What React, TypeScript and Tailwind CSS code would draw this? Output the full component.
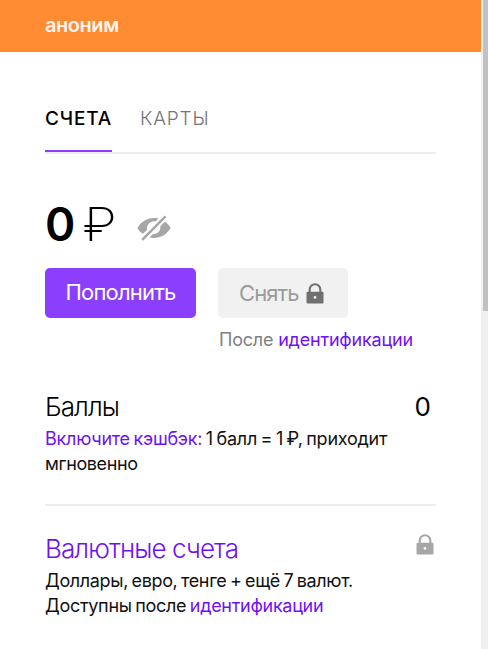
import React from "react"

interface LockProps {
  className?: string
}

function Lock({ className }: LockProps) {
  return (
    <svg viewBox="0 0 18 21" fill="none" className={className}>
      <path d="M3.7 9.500V6.400a5.300 5.200 0 0 1 10.600 0V9.500" stroke="currentColor" strokeWidth="2.1" />
      <path
        fillRule="evenodd"
        fill="currentColor"
        d="M1.700 8.800h14.600a1.200 1.200 0 0 1 1.200 1.200v9.200a1.200 1.200 0 0 1-1.200 1.200H1.700a1.200 1.200 0 0 1-1.200-1.200V10a1.200 1.200 0 0 1 1.200-1.200Zm7.300 4.200a1.400 1.400 0 1 0 0 2.800a1.400 1.400 0 0 0 0-2.800Z"
      />
    </svg>
  )
}

function HiddenEye() {
  return (
    <svg viewBox="0 0 34 26" fill="none" className="h-[26px] w-[34px] text-[#a6a6a6]">
      <path
        fill="currentColor"
        d="M21.500 3.400C13 1.800 5 5 .4 13c1.300 2.300 3 4.200 5.400 5.700L10.200 15C9.300 11 11.500 7.100 16.500 6.300L18.500 6.500Z"
      />
      <path
        fill="currentColor"
        d="M27.800 6.800C30.200 8.300 32.200 10.400 33.700 13C29 20.800 21.500 24.100 12.600 22.600L15.700 19.300C21 19.200 24 15.500 23.300 11.300Z"
      />
      <path d="M5.200 24.800L28.500 1.300" stroke="currentColor" strokeWidth="2.500" />
    </svg>
  )
}

export default function App() {
  return (
    <div className="flex h-[649px] w-[488px] overflow-hidden bg-white font-['Inter','Liberation_Sans',sans-serif] text-black">
      <div className="w-[481px] shrink-0">
        <header className="flex h-[52px] items-center bg-[#ff8b33] pb-[3px] pl-[45px]">
          <span className="text-[20px] leading-6 font-semibold tracking-[-0.45px] text-[#fff4eb]">аноним</span>
        </header>

        <main className="w-[436px] pt-[55px] pl-[45px]">
          <nav className="flex gap-[28px] border-b-2 border-[#ededed] text-[19px] leading-6">
            <span className="w-[67px] border-b-2 border-[#8b3ffd] pb-[19px] font-medium tracking-[0.8px] whitespace-nowrap">СЧЕТА</span>
            <span className="font-light tracking-[0.8px] text-[#757575]">КАРТЫ</span>
          </nav>

          <div className="mt-[46px] flex h-12 items-center leading-[48px]">
            <span className="text-[46px] font-semibold tracking-[-1px]">0</span>
            <span className="ml-[9px] origin-left scale-x-115 text-[46px] font-extralight">₽</span>
            <span className="ml-6 pt-2">
              <HiddenEye />
            </span>
          </div>

          <div className="mt-5 flex gap-[22px]">
            <button className="h-[50px] w-[151px] rounded-[5px] bg-[#8b3ffd] pb-0.5 text-[22px] tracking-[-0.8px] whitespace-nowrap text-white">
              Пополнить
            </button>
            <button className="flex h-[50px] w-[130px] items-center rounded-[5px] bg-[#f1f1f1] pl-[21px] text-[22px] text-[#9b9b9b]">
              <span className="w-[67px] text-left tracking-[-0.9px]">Снять</span>
              <Lock className="h-[21px] w-[18px] text-[#707070]" />
            </button>
          </div>
          <p className="mt-[10px] pl-[174px] text-[18px] leading-6 tracking-[-0.2px] whitespace-nowrap text-[#808080]">
            После <a className="text-[#6e11f6]">идентификации</a>
          </p>

          <section className="mt-[39px] h-[115px] border-b-2 border-[#ededed]">
            <div className="flex justify-between pr-[5px] text-[26px] leading-8">
              <h2 className="font-light tracking-[-0.9px]">Баллы</h2>
              <span>0</span>
            </div>
            <p className="mt-[3px] text-[18px] leading-[25px] tracking-[-0.25px] [word-spacing:-1.2px] whitespace-nowrap text-[#111]">
              <a className="text-[#6e11f6]">Включите кэшбэк:</a> 1 балл = 1 ₽, приходит
              <br />
              <span className="tracking-[-0.4px]">мгновенно</span>
            </p>
          </section>

          <section className="mt-[27px]">
            <div className="flex items-start justify-between pr-0.5 text-[26px] leading-8">
              <h2 className="font-light tracking-[-0.9px] text-[#6e11f6]">Валютные счета</h2>
              <Lock className="mt-px h-[21px] w-[18px] text-[#a6a6a6]" />
            </div>
            <p className="mt-[3px] text-[18px] leading-[25px] tracking-[-0.3px] [word-spacing:-1.2px] whitespace-nowrap text-[#111]">
              <span className="tracking-[-0.35px]">Доллары, евро, тенге + ещё 7 валют.</span>
              <br />
              Доступны после <a className="text-[#6e11f6]">идентификации</a>
            </p>
          </section>
        </main>
      </div>
      <div className="h-full w-[7px] shrink-0 bg-[#f0f0f0] pl-0.5">
        <div className="h-[311px] bg-[#c1c1c1]" />
      </div>
    </div>
  )
}
